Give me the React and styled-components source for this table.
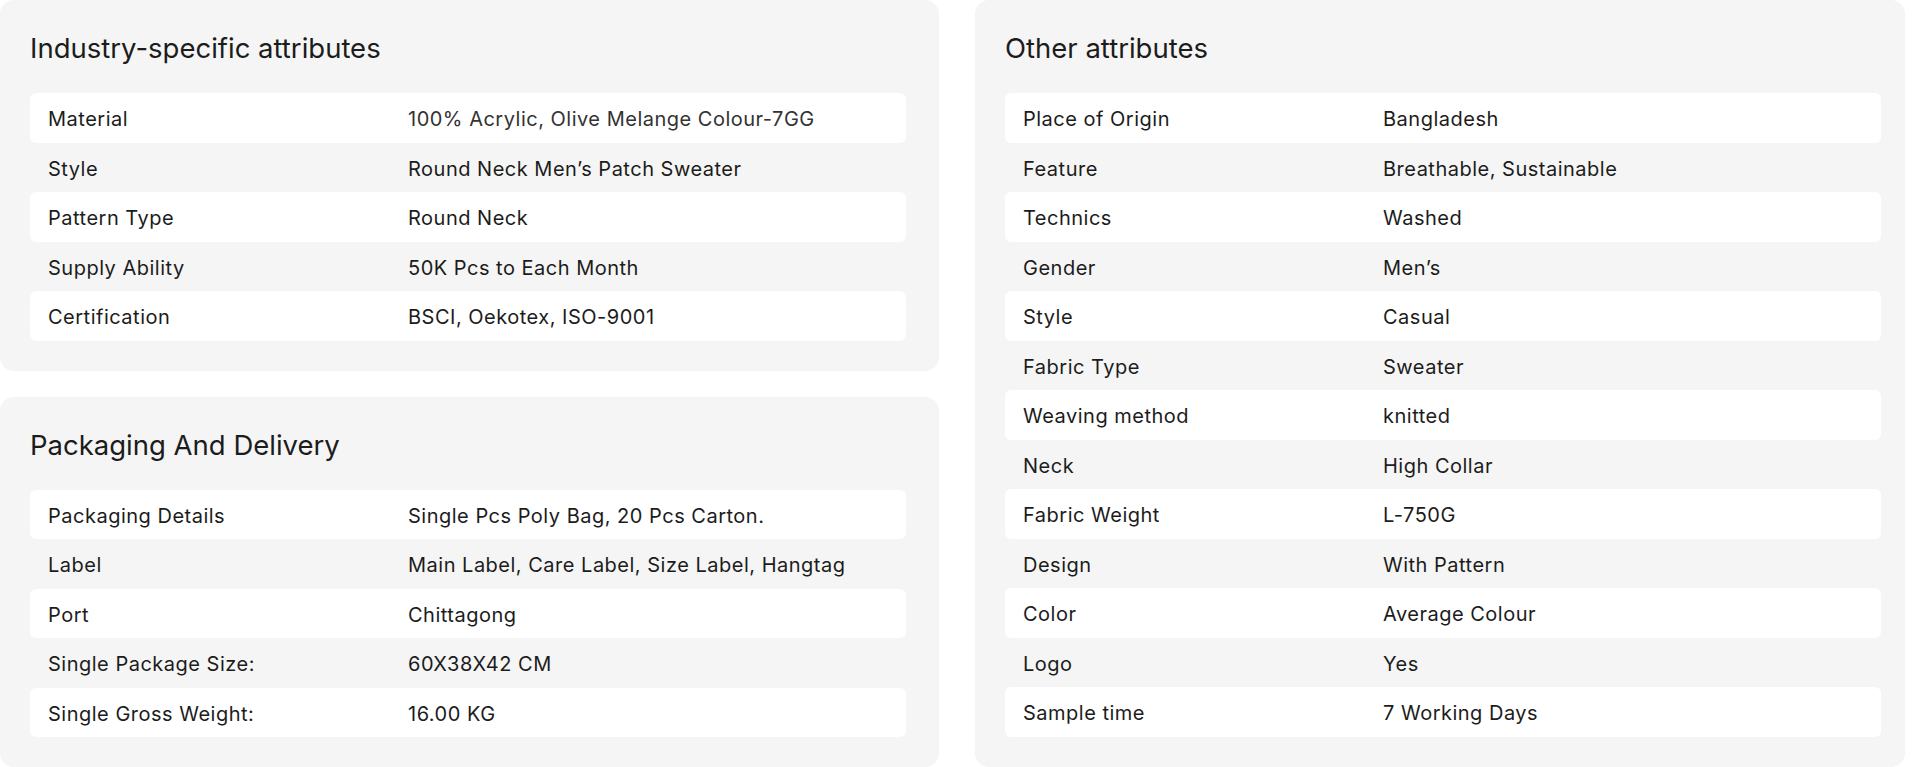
import React from 'react';
import styled, { createGlobalStyle } from 'styled-components';

const GlobalStyle = createGlobalStyle`
  body {
    margin: 0;
    background: #ffffff;
    font-family: Inter, "Noto Sans", sans-serif;
    color: #1c1c1c;
  }
`;

const Page = styled.div`
  display: grid;
  grid-template-columns: 939px 930px;
  column-gap: 36px;
  height: 767px;
`;

const Column = styled.div`
  display: flex;
  flex-direction: column;
  gap: 26px;
`;

const Card = styled.section`
  flex: 1;
  background: #f5f5f5;
  border-radius: 14px;
  padding: 32px ${(p) => p.$padRight}px 30px 30px;
`;

const Title = styled.h2`
  margin: 0 0 29px;
  font-size: 27.5px;
  line-height: 32px;
  font-weight: 400;
  color: #1c1c1c;
`;

const List = styled.div`
  display: flex;
  flex-direction: column;
`;

const Row = styled.div`
  display: flex;
  align-items: center;
  height: 49.5px;
  padding: 3px 18px 0;
  box-sizing: border-box;
  border-radius: 6px;
  background: ${(p) => (p.$shaded ? '#ffffff' : 'transparent')};
  font-size: 20px;
  letter-spacing: 0.5px;
`;

const Label = styled.span`
  width: 360px;
  flex-shrink: 0;
  color: #1c1c1c;
`;

const Value = styled.span`
  color: ${(p) => (p.$muted ? '#333333' : '#1c1c1c')};
`;

const industry = [
  ['Material', '100% Acrylic, Olive Melange Colour-7GG', true],
  ['Style', 'Round Neck Men’s Patch Sweater'],
  ['Pattern Type', 'Round Neck'],
  ['Supply Ability', '50K Pcs to Each Month'],
  ['Certification', 'BSCI, Oekotex, ISO-9001'],
];

const packaging = [
  ['Packaging Details', 'Single Pcs Poly Bag, 20 Pcs Carton.'],
  ['Label', 'Main Label, Care Label, Size Label, Hangtag'],
  ['Port', 'Chittagong'],
  ['Single Package Size:', '60X38X42 CM'],
  ['Single Gross Weight:', '16.00 KG'],
];

const other = [
  ['Place of Origin', 'Bangladesh'],
  ['Feature', 'Breathable, Sustainable'],
  ['Technics', 'Washed'],
  ['Gender', 'Men’s'],
  ['Style', 'Casual'],
  ['Fabric Type', 'Sweater'],
  ['Weaving method', 'knitted'],
  ['Neck', 'High Collar'],
  ['Fabric Weight', 'L-750G'],
  ['Design', 'With Pattern'],
  ['Color', 'Average Colour'],
  ['Logo', 'Yes'],
  ['Sample time', '7 Working Days'],
];

function AttributeCard({ title, items, padRight }) {
  return (
    <Card $padRight={padRight}>
      <Title>{title}</Title>
      <List>
        {items.map(([label, value, muted], i) => (
          <Row key={label + i} $shaded={i % 2 === 0}>
            <Label>{label}</Label>
            <Value $muted={muted}>{value}</Value>
          </Row>
        ))}
      </List>
    </Card>
  );
}

export default function App() {
  return (
    <>
      <GlobalStyle />
      <Page>
        <Column>
          <AttributeCard title="Industry-specific attributes" items={industry} padRight={33} />
          <AttributeCard title="Packaging And Delivery" items={packaging} padRight={33} />
        </Column>
        <Column>
          <AttributeCard title="Other attributes" items={other} padRight={24} />
        </Column>
      </Page>
    </>
  );
}
